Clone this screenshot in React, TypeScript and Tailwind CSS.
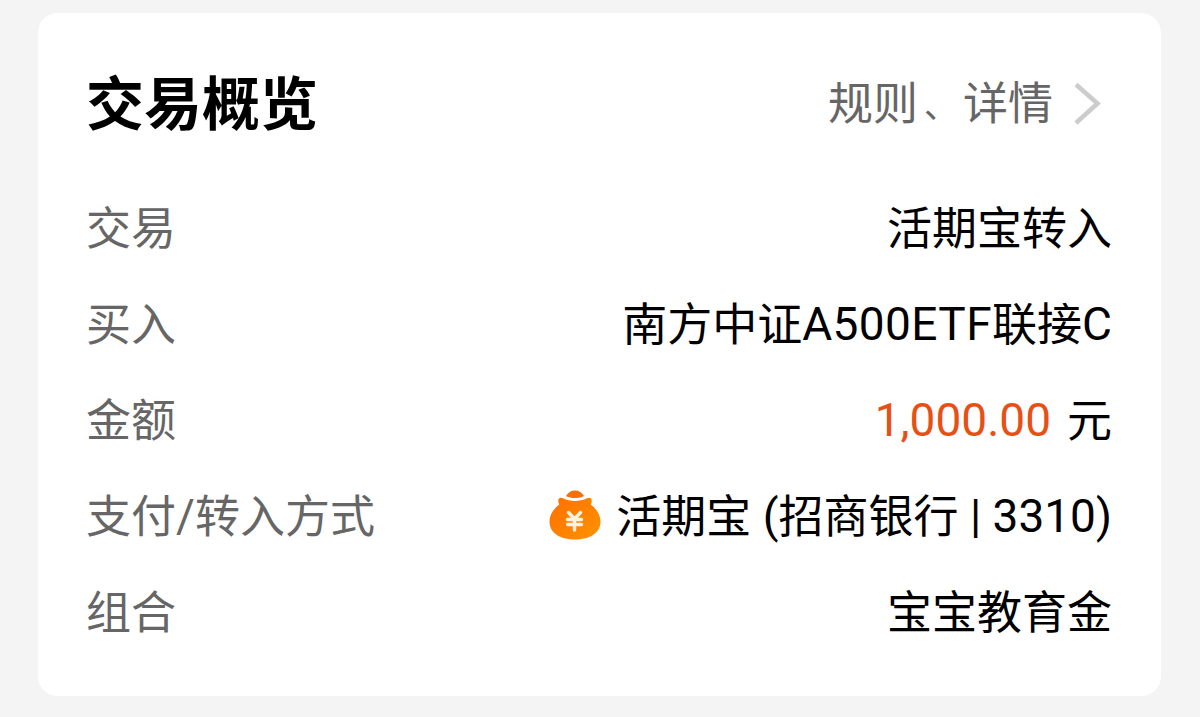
import React from 'react';

interface OverviewRowProps {
  label: React.ReactNode;
  children: React.ReactNode;
}

const OverviewRow: React.FC<OverviewRowProps> = ({ label, children }) => (
  <div className="flex h-24 items-center justify-between">
    <dt className="flex items-center text-[#666666]">{label}</dt>
    <dd className="flex items-center text-black">{children}</dd>
  </div>
);

interface LatinProps {
  children: React.ReactNode;
  className?: string;
}

// Letters and digits sit slightly larger than the Chinese text around them
const Latin: React.FC<LatinProps> = ({ children, className = '' }) => (
  <span className={`pt-1.5 font-[Roboto,sans-serif] text-[46px] leading-none whitespace-pre ${className}`}>
    {children}
  </span>
);

const MoneyBagIcon: React.FC = () => (
  <svg className="mt-1" width="52" height="50" viewBox="0 0 52 50" fill="none" aria-hidden="true">
    <defs>
      <linearGradient id="bag" x1="8" y1="8" x2="44" y2="48" gradientUnits="userSpaceOnUse">
        <stop stopColor="#ff7200" />
        <stop offset="1" stopColor="#ff9000" />
      </linearGradient>
    </defs>
    <path d="M17 6C19 2.500 22 .5 26 .5s7 2 9 5.500c-2.500 1.500-5.500 2-9 2s-6.500-.5-9-2Z" fill="#f56f0c" />
    <path
      d="M10 8.500c1-1 2.500-1 4-.3 3.500 1.800 7.500 2.800 12 2.800s8.500-1 12-2.800c1.500-.7 3-.7 4 .3 1.200 1.400.8 3.500-.2 6C47.500 19 51.500 25 51.500 31.500 51.500 43 41 49.500 26 49.500S.5 43 .5 31.500C.5 25 4.500 19 10.200 14.500 9.200 12 8.800 9.900 10 8.500Z"
      fill="url(#bag)"
    />
    <path
      d="m19.500 22.500 6 6.500 6-6.500M18.500 29.500h14M18.500 34.500h14M25.500 29v11"
      stroke="#fff3e0"
      strokeWidth="3.400"
      strokeLinecap="round"
    />
  </svg>
);

export default function App() {
  return (
    <main className="h-[717px] w-[1200px] bg-[#f4f4f4] pt-[13px] pr-[39px] pl-[38px] font-['Noto_Sans_CJK_SC',sans-serif] text-[45px] leading-none">
      <section className="h-[683px] rounded-[20px] bg-white pt-[39px] pr-[49px] pl-[48px]">
        <header className="flex h-24 items-center justify-between">
          <h1 className="text-[58px] font-bold">交易概览</h1>
          <a href="#" className="flex items-center text-[#666666]">
            规则<span className="w-[45px] pt-2 pl-1.5 text-[34px]">、</span>详情
            <svg className="mt-2 mr-[10px] ml-[21px]" width="28" height="44" viewBox="0 0 28 44" fill="none" aria-hidden="true">
              <path d="m2 2.500 21.500 19L2 41" stroke="#cccccc" strokeWidth="4.500" />
            </svg>
          </a>
        </header>

        <dl className="mt-[29px]">
          <OverviewRow label="交易">活期宝转入</OverviewRow>
          <OverviewRow label="买入">
            南方中证<Latin className="tracking-[0.4px]">A500ETF</Latin>联接<Latin>C</Latin>
          </OverviewRow>
          <OverviewRow label="金额">
            <Latin className="mr-4 text-[#e65014]">1,000.00</Latin>元
          </OverviewRow>
          <OverviewRow label={<>支付<Latin>/</Latin>转入方式</>}>
            <MoneyBagIcon />
            <span className="ml-[15px]">活期宝</span>
            <Latin> (</Latin>招商银行<Latin> | 3310)</Latin>
          </OverviewRow>
          <OverviewRow label="组合">宝宝教育金</OverviewRow>
        </dl>
      </section>
    </main>
  );
}
